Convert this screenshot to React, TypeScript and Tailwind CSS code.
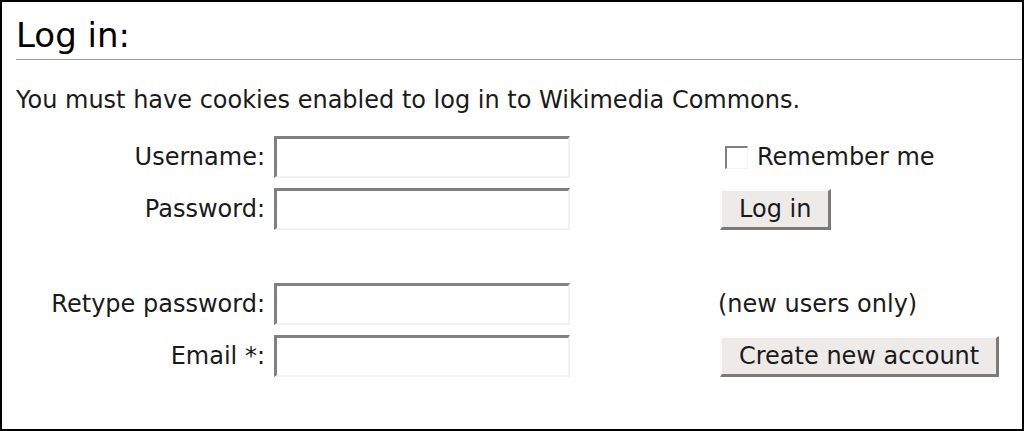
const font = { fontFamily: '"DejaVu Sans", "Liberation Sans", sans-serif' }

function TextField() {
  return (
    <input
      type="text"
      className="h-[42px] w-[296px] border-t-[3px] border-l-[3px] border-r-2 border-b-2 border-t-[#808080] border-l-[#808080] border-r-[#f2f2f2] border-b-[#f2f2f2] bg-white outline-none"
    />
  )
}

function Button({ children }: { children: React.ReactNode }) {
  return (
    <button className="h-[41px] border-t-2 border-l-2 border-r-[3px] border-b-[3px] border-t-[#fafafa] border-l-[#fafafa] border-r-[#7a7a7a] border-b-[#7a7a7a] bg-[#eeeae8] px-[17px] text-[24px] leading-none text-[#1a1a1a]">
      {children}
    </button>
  )
}

function Row({ label, right }: { label: string; right: React.ReactNode }) {
  return (
    <div className="flex items-center">
      <div className="w-[250px] pr-px text-right text-[24px] leading-[30px] text-[#1a1a1a]">{label}</div>
      <div className="ml-[8px]">
        <TextField />
      </div>
      <div className="ml-[150px] flex items-center">{right}</div>
    </div>
  )
}

export default function App() {
  return (
    <div style={font} className="h-[431px] w-[1024px] border-2 border-black bg-white pl-[14px] pt-[13px]">
      <h2 className="border-b border-[#a0a0a0] pb-[4px] text-[34px] leading-[40px] text-black">Log in:</h2>
      <p className="mt-[25px] text-[24px] leading-[30px] text-[#1a1a1a]">
        You must have cookies enabled to log in to Wikimedia Commons.
      </p>
      <form className="mt-[21px] flex flex-col gap-[10px]">
        <Row
          label="Username:"
          right={
            <label className="flex items-center text-[24px] leading-[30px] text-[#1a1a1a]">
              <span className="ml-[5px] mr-[9px] inline-block h-[23px] w-[23px] border-t-2 border-l-2 border-r border-b border-t-[#808080] border-l-[#808080] border-r-[#f2f2f2] border-b-[#f2f2f2] bg-white" />
              Remember me
            </label>
          }
        />
        <Row label="Password:" right={<Button>Log in</Button>} />
        <div className="h-[33px]" />
        <Row
          label="Retype password:"
          right={<span className="-ml-[2px] text-[24px] leading-[30px] text-[#1a1a1a]">(new users only)</span>}
        />
        <Row label="Email *:" right={<Button>Create new account</Button>} />
      </form>
    </div>
  )
}
